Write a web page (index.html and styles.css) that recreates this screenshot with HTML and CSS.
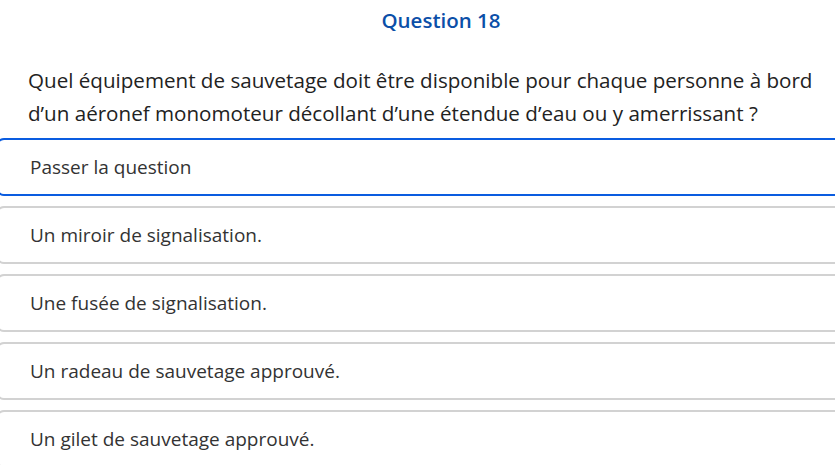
FILE: index.html
```html
<!DOCTYPE html>
<html lang="fr">
<head>
<meta charset="utf-8">
<link rel="stylesheet" href="styles.css">
</head>
<body>
<div class="quiz">
  <h2 class="title">Question 18</h2>
  <p class="question">Quel équipement de sauvetage doit être disponible pour chaque personne à bord d’un aéronef monomoteur décollant d’une étendue d’eau ou y amerrissant ?</p>
  <div class="answers">
    <div class="answer active">Passer la question</div>
    <div class="answer">Un miroir de signalisation.</div>
    <div class="answer">Une fusée de signalisation.</div>
    <div class="answer">Un radeau de sauvetage approuvé.</div>
    <div class="answer">Un gilet de sauvetage approuvé.</div>
  </div>
</div>
</body>
</html>
```
FILE: styles.css
```css
html, body {
  margin: 0;
  padding: 0;
  background: #fff;
  overflow: hidden;
}
body {
  font-family: "Open Sans", "Noto Sans", sans-serif;
  color: #333;
}
.quiz {
  width: 890px;
  margin-left: -4px;
}
.title {
  margin: 0;
  padding-top: 7px;
  text-align: center;
  font-size: 20.5px;
  font-weight: 600;
  color: #0b4fa8;
  line-height: 26px;
}
.question {
  max-width: 805px;
  margin: 31px 0 0 32px;
  font-size: 20.6px;
  line-height: 33px;
  color: #222;
}
.answers {
  margin-top: 8px;
  display: flex;
  flex-direction: column;
  gap: 10px;
}
.answer {
  box-sizing: border-box;
  height: 58px;
  border: 2px solid #d2d2d2;
  border-radius: 8px;
  padding-left: 32px;
  display: flex;
  align-items: center;
  font-size: 19px;
  color: #333;
}
.answer.active {
  border-color: #0a5ce0;
}
```
